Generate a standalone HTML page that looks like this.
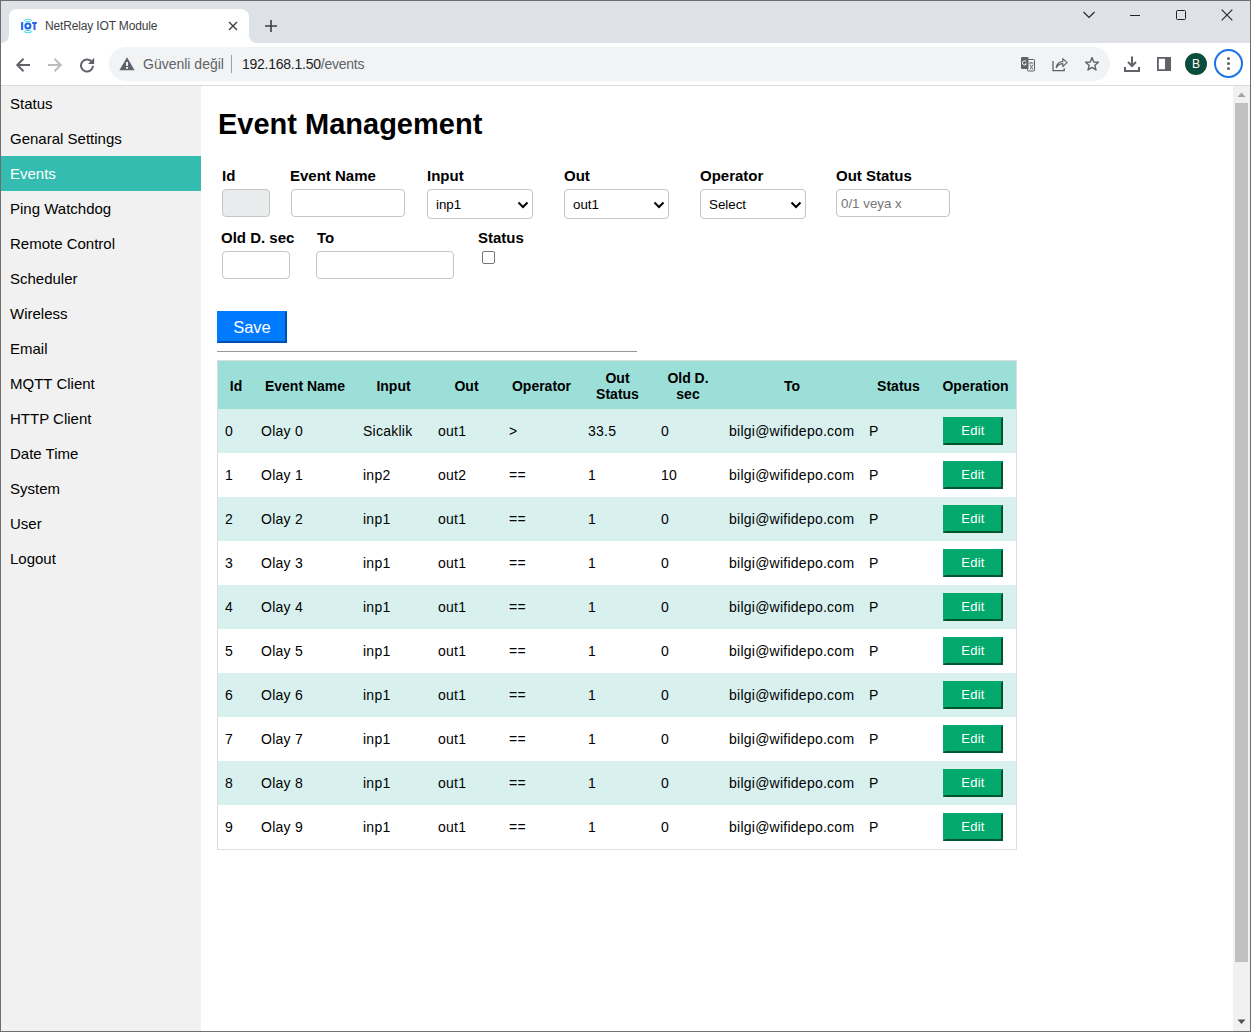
<!DOCTYPE html>
<html><head><meta charset="utf-8">
<style>
*{margin:0;padding:0;box-sizing:border-box}
html,body{width:1251px;height:1032px;overflow:hidden;background:#fff;font-family:"Liberation Sans",sans-serif}
.a{position:absolute}
#win{position:absolute;left:0;top:0;width:1251px;height:1032px;overflow:hidden}
#strip{position:absolute;left:0;top:0;width:1251px;height:43px;background:#dee1e6}
#tab{position:absolute;left:9px;top:9px;width:240px;height:34px;background:#fff;border-radius:8px 8px 0 0}
.flare{position:absolute;top:35px;width:8px;height:8px;background:#fff}
.flare i{position:absolute;left:0;top:0;width:8px;height:8px;background:#dee1e6}
#toolbar{position:absolute;left:0;top:43px;width:1251px;height:43px;background:#fff;border-bottom:1px solid #dadce0}
#omni{position:absolute;left:109px;top:4px;width:1001px;height:34px;background:#f1f3f4;border-radius:17px}
.side{position:absolute;left:0;top:86px;width:201px;height:946px;background:#f1f1f1}
.side div{height:35px;line-height:35px;font-size:15px;padding-left:10px;color:#000;white-space:nowrap}
.side div.on{background:#35bcb0;color:#fff}
.lbl{position:absolute;font-size:15px;font-weight:bold;line-height:15px;color:#000;white-space:nowrap}
.inp{position:absolute;border:1px solid #c6c6c6;border-radius:4px;background:#fff}
.sel{position:absolute;border:1px solid #c6c6c6;border-radius:4px;background:#fff;font-size:13.333px;color:#000}
.sel span{position:absolute;left:8px;top:8px;line-height:13px}
.sel svg{position:absolute;right:3px;top:11px}
table{border-collapse:separate;border-spacing:0;position:absolute;left:217px;top:360px;width:800px;border:1px solid #ddd;table-layout:fixed}
th{background:#9bdfd8;font-size:14px;font-weight:bold;height:48px;line-height:16px;text-align:center;padding:1px 4px 0;color:#000}
td{font-size:14px;letter-spacing:0.25px;height:44px;padding:0 0 0 7px;text-align:left;color:#000;white-space:nowrap}
tr.l td{background:#d8f1ee}
.edit{display:block;width:60px;height:28px;margin-left:1px;background:#04aa6d;color:#fff;font-size:13px;text-align:center;line-height:23px;border-style:solid;border-width:2px;border-color:#04aa6d #00552f #00552f #04aa6d}
</style></head><body>
<div id="win">
 <div id="strip"></div>
 <div id="tab"></div>
 <div class="flare" style="left:1px"><i style="border-radius:0 0 8px 0"></i></div>
 <div class="flare" style="left:249px"><i style="border-radius:0 0 0 8px"></i></div>
 <!-- favicon -->
 <svg class="a" style="left:20px;top:18px" width="17" height="16" viewBox="0 0 17 16">
  <rect x="1" y="4" width="2.2" height="8" rx="0.6" fill="#2b6bff"/>
  <circle cx="7.9" cy="8" r="2.5" fill="none" stroke="#2262e8" stroke-width="2.1"/>
  <path d="M3.9 2.6 Q7.9 -0.2 11.9 2.6 M5.2 4.1 Q7.9 2.9 10.6 4.1 M3.9 13.4 Q7.9 16.2 11.9 13.4 M5.2 11.9 Q7.9 13.1 10.6 11.9" stroke="#3edce6" stroke-width="1.1" fill="none"/>
  <rect x="12.2" y="4" width="4.6" height="2" fill="#2a63e6"/><rect x="13.5" y="4" width="2" height="8" fill="#2a63e6"/>
 </svg>
 <div class="a" style="left:45px;top:19px;font-size:12px;line-height:15px;color:#3c4043;letter-spacing:-0.15px">NetRelay IOT Module</div>
 <svg class="a" style="left:228px;top:21px" width="10" height="10" viewBox="0 0 10 10"><path d="M1 1L9 9M9 1L1 9" stroke="#3c4043" stroke-width="1.4"/></svg>
 <svg class="a" style="left:264px;top:19px" width="14" height="14" viewBox="0 0 14 14"><path d="M7 1V13M1 7H13" stroke="#3c4043" stroke-width="1.6"/></svg>
 <!-- window controls -->
 <svg class="a" style="left:1083px;top:11px" width="12" height="8" viewBox="0 0 12 8"><path d="M0.5 1L6 6.5L11.5 1" stroke="#202124" stroke-width="1.1" fill="none"/></svg>
 <div class="a" style="left:1130px;top:15px;width:10px;height:1px;background:#202124"></div>
 <div class="a" style="left:1176px;top:10px;width:10px;height:10px;border:1px solid #202124;border-radius:1.5px"></div>
 <svg class="a" style="left:1221px;top:9px" width="12" height="12" viewBox="0 0 12 12"><path d="M0.7 0.7L11.3 11.3M11.3 0.7L0.7 11.3" stroke="#202124" stroke-width="1.1"/></svg>

 <div id="toolbar">
  <svg class="a" style="left:15px;top:14px" width="16" height="16" viewBox="0 0 16 16"><path d="M15 8H2.5M8.5 1.8L2.3 8L8.5 14.2" stroke="#5f6368" stroke-width="2" fill="none"/></svg>
  <svg class="a" style="left:47px;top:14px" width="16" height="16" viewBox="0 0 16 16"><path d="M1 8H13.5M7.5 1.8L13.7 8L7.5 14.2" stroke="#babcbe" stroke-width="2" fill="none"/></svg>
  <svg class="a" style="left:79px;top:14px" width="16" height="16" viewBox="0 0 16 16"><path d="M13.2 5.5A6 6 0 1 0 14 8.8" stroke="#5f6368" stroke-width="2" fill="none"/><path d="M15.2 0.8V7H9Z" fill="#5f6368"/></svg>
  <div id="omni">
   <svg class="a" style="left:10px;top:10px" width="16" height="14" viewBox="0 0 16 14"><path d="M8 0.3L15.6 13.3H0.4Z" fill="#5f6368"/><rect x="7.1" y="5" width="1.8" height="4" fill="#fff"/><rect x="7.1" y="10" width="1.8" height="1.8" fill="#fff"/></svg>
   <div class="a" style="left:34px;top:9px;font-size:14px;line-height:16px;color:#5f6368;white-space:nowrap">Güvenli değil</div>
   <div class="a" style="left:122px;top:8px;width:1px;height:18px;background:#9aa0a6"></div>
   <div class="a" style="left:133px;top:9px;font-size:14px;line-height:16px;color:#202124;white-space:nowrap;letter-spacing:-0.25px">192.168.1.50<span style="color:#5f6368">/events</span></div>
   <!-- translate -->
   <svg class="a" style="left:912px;top:10px" width="15" height="15" viewBox="0 0 15 15"><rect x="6.5" y="2.5" width="7" height="11.5" rx="0.8" fill="none" stroke="#5f6368" stroke-width="1"/><rect x="0" y="0" width="7.5" height="12" rx="1" fill="#5f6368"/><path d="M5.2 4.6A2.1 2.1 0 1 0 5.3 7H3.8" stroke="#fff" stroke-width="1" fill="none"/><path d="M8 6H12.5M10.2 5V6M9 7.5L12 12.5M12 7.5L9 12.5" stroke="#5f6368" stroke-width="0.9" fill="none"/></svg>
   <!-- share -->
   <svg class="a" style="left:943px;top:10px" width="16" height="15" viewBox="0 0 16 15"><path d="M1 4V13.6H12.2V11.3" stroke="#5f6368" stroke-width="1.3" fill="none"/><path d="M4.3 10.6C4.8 6.8 7.4 4.6 10.8 4.6V1.6L15 5.6L10.8 9.6V6.7C8.2 6.7 5.9 8 4.3 10.6Z" stroke="#5f6368" stroke-width="1.2" fill="none" stroke-linejoin="round"/></svg>
   <!-- star -->
   <svg class="a" style="left:976px;top:10px" width="14" height="14" viewBox="0 0 14 14"><path d="M7.00 0.60 L8.76 4.97 L13.47 5.30 L9.85 8.33 L11.00 12.90 L7.00 10.40 L3.00 12.90 L4.15 8.33 L0.53 5.30 L5.24 4.97Z" stroke="#5f6368" stroke-width="1.4" fill="none" stroke-linejoin="round"/></svg>
  </div>
  <!-- download -->
  <svg class="a" style="left:1124px;top:13px" width="16" height="16" viewBox="0 0 16 16"><path d="M8 0.5V10M4 6L8 10L12 6" stroke="#5f6368" stroke-width="2" fill="none"/><path d="M1 11V15H15V11" stroke="#5f6368" stroke-width="2" fill="none"/></svg>
  <!-- side panel -->
  <svg class="a" style="left:1157px;top:14px" width="14" height="14" viewBox="0 0 14 14"><rect x="0.9" y="0.9" width="12.2" height="12.2" fill="none" stroke="#5f6368" stroke-width="1.8"/><rect x="8" y="0" width="6" height="14" fill="#5f6368"/></svg>
  <div class="a" style="left:1185px;top:10px;width:22px;height:22px;border-radius:50%;background:#0b4d3c;color:#fff;font-size:12px;line-height:22px;text-align:center">B</div>
  <div class="a" style="left:1214px;top:6px;width:29px;height:29px;border-radius:50%;border:2px solid #1a73e8"></div>
  <div class="a" style="left:1227px;top:14px;width:3px;height:3px;border-radius:50%;background:#5f6368;box-shadow:0 5px 0 #5f6368,0 10px 0 #5f6368"></div>
 </div>
 <div class="side">
  <div>Status</div><div>Genaral Settings</div><div class="on">Events</div><div>Ping Watchdog</div><div>Remote Control</div><div>Scheduler</div><div>Wireless</div><div>Email</div><div>MQTT Client</div><div>HTTP Client</div><div>Date Time</div><div>System</div><div>User</div><div>Logout</div>
 </div>
 <div class="a" style="left:218px;top:110px;font-size:29px;font-weight:bold;line-height:29px;white-space:nowrap">Event Management</div>
 <div class="lbl" style="left:222px;top:168px">Id</div>
 <div class="lbl" style="left:290px;top:168px">Event Name</div>
 <div class="lbl" style="left:427px;top:168px">Input</div>
 <div class="lbl" style="left:564px;top:168px">Out</div>
 <div class="lbl" style="left:700px;top:168px">Operator</div>
 <div class="lbl" style="left:836px;top:168px">Out Status</div>
 <div class="inp" style="left:222px;top:189px;width:48px;height:28px;background:#e9ecec"></div>
 <div class="inp" style="left:291px;top:189px;width:114px;height:28px"></div>
 <div class="sel" style="left:427px;top:189px;width:106px;height:30px"><span>inp1</span><svg width="12" height="8" viewBox="0 0 12 8"><path d="M1.5 1.5L6 6L10.5 1.5" stroke="#000" stroke-width="2" fill="none"/></svg></div>
 <div class="sel" style="left:564px;top:189px;width:105px;height:30px"><span>out1</span><svg width="12" height="8" viewBox="0 0 12 8"><path d="M1.5 1.5L6 6L10.5 1.5" stroke="#000" stroke-width="2" fill="none"/></svg></div>
 <div class="sel" style="left:700px;top:189px;width:106px;height:30px"><span>Select</span><svg width="12" height="8" viewBox="0 0 12 8"><path d="M1.5 1.5L6 6L10.5 1.5" stroke="#000" stroke-width="2" fill="none"/></svg></div>
 <div class="inp" style="left:836px;top:189px;width:114px;height:28px"><span class="a" style="left:4px;top:7px;font-size:13.333px;line-height:13px;color:#757575;white-space:nowrap">0/1 veya x</span></div>
 <div class="lbl" style="left:221px;top:230px">Old D. sec</div>
 <div class="lbl" style="left:317px;top:230px">To</div>
 <div class="lbl" style="left:478px;top:230px">Status</div>
 <div class="inp" style="left:222px;top:251px;width:68px;height:28px"></div>
 <div class="inp" style="left:316px;top:251px;width:138px;height:28px"></div>
 <div class="a" style="left:482px;top:251px;width:13px;height:13px;border:1px solid #767676;border-radius:2px;background:#fff"></div>
 <div class="a" style="left:217px;top:311px;width:70px;height:32px;background:#007bff;border-style:solid;border-width:2px;border-color:#007bff #0050b0 #0050b0 #007bff;color:#fff;font-size:16.5px;line-height:29px;text-align:center">Save</div>
 <div class="a" style="left:217px;top:351px;width:420px;height:1px;background:#9a9a9a"></div>
 <table>
  <colgroup><col style="width:36px"><col style="width:102px"><col style="width:75px"><col style="width:71px"><col style="width:79px"><col style="width:73px"><col style="width:68px"><col style="width:140px"><col style="width:73px"><col style="width:81px"></colgroup>
  <tr><th>Id</th><th>Event Name</th><th>Input</th><th>Out</th><th>Operator</th><th>Out Status</th><th>Old D. sec</th><th>To</th><th>Status</th><th>Operation</th></tr>
  <tr class="l"><td>0</td><td>Olay 0</td><td>Sicaklik</td><td>out1</td><td>&gt;</td><td>33.5</td><td>0</td><td>bilgi@wifidepo.com</td><td>P</td><td><span class="edit">Edit</span></td></tr>
  <tr><td>1</td><td>Olay 1</td><td>inp2</td><td>out2</td><td>==</td><td>1</td><td>10</td><td>bilgi@wifidepo.com</td><td>P</td><td><span class="edit">Edit</span></td></tr>
  <tr class="l"><td>2</td><td>Olay 2</td><td>inp1</td><td>out1</td><td>==</td><td>1</td><td>0</td><td>bilgi@wifidepo.com</td><td>P</td><td><span class="edit">Edit</span></td></tr>
  <tr><td>3</td><td>Olay 3</td><td>inp1</td><td>out1</td><td>==</td><td>1</td><td>0</td><td>bilgi@wifidepo.com</td><td>P</td><td><span class="edit">Edit</span></td></tr>
  <tr class="l"><td>4</td><td>Olay 4</td><td>inp1</td><td>out1</td><td>==</td><td>1</td><td>0</td><td>bilgi@wifidepo.com</td><td>P</td><td><span class="edit">Edit</span></td></tr>
  <tr><td>5</td><td>Olay 5</td><td>inp1</td><td>out1</td><td>==</td><td>1</td><td>0</td><td>bilgi@wifidepo.com</td><td>P</td><td><span class="edit">Edit</span></td></tr>
  <tr class="l"><td>6</td><td>Olay 6</td><td>inp1</td><td>out1</td><td>==</td><td>1</td><td>0</td><td>bilgi@wifidepo.com</td><td>P</td><td><span class="edit">Edit</span></td></tr>
  <tr><td>7</td><td>Olay 7</td><td>inp1</td><td>out1</td><td>==</td><td>1</td><td>0</td><td>bilgi@wifidepo.com</td><td>P</td><td><span class="edit">Edit</span></td></tr>
  <tr class="l"><td>8</td><td>Olay 8</td><td>inp1</td><td>out1</td><td>==</td><td>1</td><td>0</td><td>bilgi@wifidepo.com</td><td>P</td><td><span class="edit">Edit</span></td></tr>
  <tr><td>9</td><td>Olay 9</td><td>inp1</td><td>out1</td><td>==</td><td>1</td><td>0</td><td>bilgi@wifidepo.com</td><td>P</td><td><span class="edit">Edit</span></td></tr>
 </table>
 <!-- scrollbar -->
 <div class="a" style="left:1233px;top:86px;width:17px;height:945px;background:#f1f1f1"></div>
 <div class="a" style="left:1235px;top:103px;width:13px;height:859px;background:#c1c1c1"></div>
 <svg class="a" style="left:1237px;top:92px" width="9" height="6" viewBox="0 0 9 6"><path d="M4.5 0.5L8.5 5H0.5Z" fill="#a3a3a3"/></svg>
 <svg class="a" style="left:1237px;top:1019px" width="9" height="6" viewBox="0 0 9 6"><path d="M0.5 0.5H8.5L4.5 5Z" fill="#505050"/></svg>
 <!-- window border -->
 <div class="a" style="left:0;top:0;width:1251px;height:1px;background:#6e6e6e"></div>
 <div class="a" style="left:0;top:1031px;width:1251px;height:1px;background:#6e6e6e"></div>
 <div class="a" style="left:0;top:0;width:1px;height:1032px;background:#6e6e6e"></div>
 <div class="a" style="left:1250px;top:0;width:1px;height:1032px;background:#6e6e6e"></div>
</div>
</body></html>
